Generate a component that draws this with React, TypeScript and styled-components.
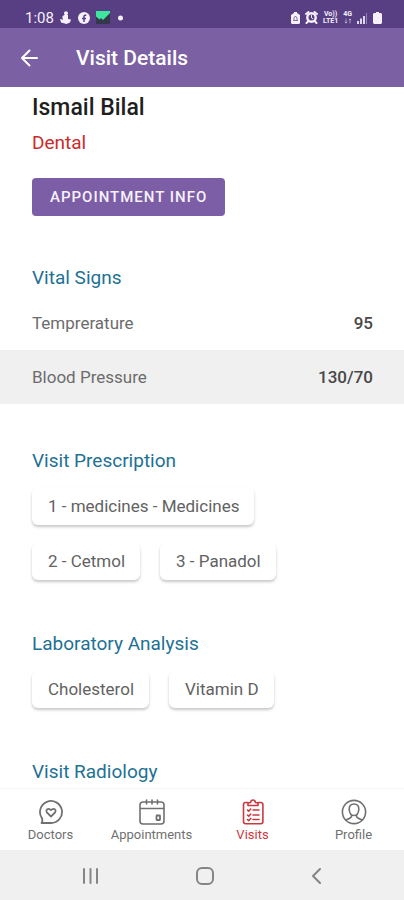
import React from "react";
import styled, { createGlobalStyle } from "styled-components";

const GlobalStyle = createGlobalStyle`
  * { box-sizing: border-box; }
  body { margin: 0; background: #fff; font-family: Roboto, "Liberation Sans", sans-serif; }
  button { font-family: inherit; border: 0; padding: 0; background: none; cursor: pointer; }
`;

const Screen = styled.div`
  display: flex;
  flex-direction: column;
  height: 100vh;
  overflow: hidden;
`;

const StatusBar = styled.div`
  display: flex;
  flex: none;
  justify-content: space-between;
  align-items: center;
  height: 28px;
  padding: 7px 22px 0 25px;
  background: #583e82;
  color: #f5f0fb;
`;

const StatusGroup = styled.div<{ $gap: number }>`
  display: flex;
  align-items: center;
  gap: ${(p) => p.$gap}px;
`;

const Clock = styled.time`
  font-size: 15px;
  line-height: 18px;
`;

const NetworkLabel = styled.span`
  display: flex;
  flex-direction: column;
  align-items: center;
  font-size: 7px;
  line-height: 7px;
  font-weight: 700;
`;

const AppBar = styled.header`
  display: flex;
  flex: none;
  align-items: center;
  gap: 36px;
  height: 59px;
  padding: 0 19px;
  background: #7b60a3;
  color: #fff;
`;

const BackButton = styled.button`
  display: flex;
  color: inherit;
`;

const Title = styled.h1`
  margin: 0;
  font-size: 21px;
  line-height: 24px;
  font-weight: 500;
`;

const Content = styled.main`
  flex: 1;
  min-height: 0;
  overflow: hidden;
  padding-top: 7px;
`;

const Summary = styled.section`
  padding: 0 32px;
`;

const PatientName = styled.h2`
  margin: 0;
  color: #1f1f1f;
  font-size: 23px;
  line-height: 28px;
  font-weight: 500;
`;

const Department = styled.p`
  margin: 9px 0 23px;
  color: #cb2b2b;
  font-size: 19px;
  line-height: 24px;
`;

const InfoButton = styled.button`
  && {
    display: block;
    height: 38px;
    padding: 0 18px;
    border-radius: 4px;
    background: #7b5ea5;
    color: #f7f2fc;
    font-size: 15px;
    font-weight: 500;
    letter-spacing: 1px;
  }
`;

const Section = styled.section`
  padding-top: 45px;
`;

const VitalsSection = styled(Section)`
  padding-top: 50px;
`;

const SectionTitle = styled.h3`
  margin: 0;
  padding: 0 32px;
  color: #1d7195;
  font-size: 19px;
  line-height: 24px;
  font-weight: 400;
`;

const VitalsTable = styled.table`
  width: 100%;
  margin-top: 6px;
  border-collapse: collapse;
  font-size: 17px;
  line-height: 24px;

  tr:nth-child(even) { background: #f0f0f0; }
  th { height: 54px; padding: 0 0 0 32px; text-align: left; font-weight: 400; color: #6c6c6c; }
  td { padding: 0 31px 0 0; text-align: right; font-weight: 500; color: #484848; }
`;

const ChipList = styled.ul`
  display: flex;
  flex-wrap: wrap;
  gap: 18px 20px;
  margin: 0;
  padding: 15px 32px 7px;
  list-style: none;
`;

const Chip = styled.li`
  padding: 0 15px 0 16px;
  border-radius: 6px;
  background: #fff;
  box-shadow: 0 2px 3px rgba(0, 0, 0, 0.22);
  color: #626262;
  font-size: 17px;
  line-height: 37px;
`;

const TabBar = styled.nav`
  display: grid;
  grid-template-columns: repeat(4, 1fr);
  flex: none;
  height: 62px;
  border-top: 1px solid #f5f5f5;
  background: #fff;
`;

const Tab = styled.a<{ $active?: boolean }>`
  display: flex;
  flex-direction: column;
  align-items: center;
  gap: 2px;
  padding-top: 10px;
  color: ${(p) => (p.$active ? "#cc3840" : "#707070")};
  font-size: 13px;
  line-height: 16px;
  text-decoration: none;
`;

const SystemBar = styled.div`
  display: flex;
  flex: none;
  justify-content: space-between;
  align-items: center;
  height: 50px;
  padding: 2px 82px 0;
  background: #f0f0f0;
  color: #858585;
`;

const SystemButton = styled.button`
  display: flex;
  color: inherit;
`;

const line = { fill: "none", stroke: "currentColor", strokeLinecap: "round", strokeLinejoin: "round" } as const;

const NotificationIcons = () => (
  <>
    <svg width="12" height="13" viewBox="0 0 12 13" fill="currentColor" aria-hidden="true">
      <circle cx="6" cy="2.3" r="2" />
      <path d="M4 4h4v4L11 8.500l-1 3L6.500 13 1 11.500 0 8l3 .7-.8-3z" />
    </svg>
    <svg width="12" height="12" viewBox="0 0 12 12" aria-hidden="true">
      <circle cx="6" cy="6" r="6" fill="currentColor" />
      <path d="M8.300 3.300H7.200Q6 3.300 6 4.600V10M4 6.400h4" fill="none" stroke="#583e82" strokeWidth="1.500" />
    </svg>
    <svg width="14" height="13" viewBox="0 0 14 13" aria-hidden="true">
      <rect width="14" height="13" rx="1" fill="#34384a" />
      <path d="M0 0h14v2L7 9 5 7 3.500 8.500 0 5.500z" fill="#3ce5a0" />
    </svg>
    <svg width="13" height="6" viewBox="0 0 13 6" fill="currentColor" aria-hidden="true">
      <circle cx="4.500" cy="3" r="2.500" />
    </svg>
  </>
);

const DeviceIcons = () => (
  <>
    <svg width="9" height="12" viewBox="0 0 9 12" aria-hidden="true">
      <path d="M3 0h3v1l3 2v7.500Q9 12 7.500 12h-6Q0 12 0 10.500V3l3-2z" fill="currentColor" />
      <path d="M2 8.500h5M3 8V6l1.500-2L6 6v2" fill="none" stroke="#583e82" opacity=".7" />
    </svg>
    <svg width="13" height="13" viewBox="0 0 13 13" aria-hidden="true">
      <path d="M1 3l2.500-2M12 3L9.500 1M3 10.500l-1.500 1.500M10 10.500l1.500 1.500" {...line} strokeWidth="2" />
      <circle cx="6.500" cy="6.500" r="4.200" {...line} strokeWidth="2.400" />
      <path d="M6.500 4.500v2.300l1.200.8" {...line} />
    </svg>
    <NetworkLabel>
      <span>Vo))</span>
      <span>LTE1</span>
    </NetworkLabel>
    <NetworkLabel>
      <span>4G</span>
      <svg width="8" height="6" viewBox="0 0 8 6" aria-hidden="true">
        <path d="M2 5V1M1 4l1 1 1-1M6 5V1M5 2l1-1 1 1" {...line} opacity=".5" />
      </svg>
    </NetworkLabel>
    <svg width="11" height="12" viewBox="0 0 11 12" fill="currentColor" aria-hidden="true">
      <path d="M0 9h2v3H0zM3 6.500h2V12H3zM6 4h2v8H6z" opacity=".85" />
      <path d="M9 1h1v11H9z" opacity=".4" />
    </svg>
    <svg width="9" height="12" viewBox="0 0 9 12" fill="currentColor" aria-hidden="true">
      <path d="M3 0h3v1h2l1 1v9l-1 1H1l-1-1V2l1-1h2z" />
    </svg>
  </>
);

const DoctorsIcon = () => (
  <svg width="26" height="26" viewBox="0 0 26 26" {...line} strokeWidth="1.800" aria-hidden="true">
    <path d="M3.500 24H13A11 11 0 1 0 3.800 19q1.300 2.500-.3 5z" />
    <path d="M13 17.500L8.800 13.300q-1-1.800.3-3 2.100-1.200 3.900.8 1.800-2 3.900-.8 1.300 1.200.3 3z" />
  </svg>
);

const AppointmentsIcon = () => (
  <svg width="26" height="26" viewBox="0 0 26 26" {...line} strokeWidth="1.600" aria-hidden="true">
    <rect x="1" y="3" width="24" height="22" rx="3" />
    <path d="M1.500 9.500h23M7.500 1v4M13 1v4M18.500 1v4" />
    <rect x="17.500" y="16.500" width="3.500" height="4.500" rx=".5" strokeWidth="1.800" />
  </svg>
);

const VisitsIcon = () => (
  <svg width="26" height="26" viewBox="0 0 26 26" {...line} strokeWidth="1.600" aria-hidden="true">
    <path d="M8 3.500H5.700Q3.500 3.500 3.500 5.700v16.800q0 2.200 2.200 2.200h15q2.200 0 2.200-2.200V5.700q0-2.200-2.200-2.200H18" />
    <path d="M8 6.500V4l2.500-.5Q11 1 13 1t2.500 2.500L18 4v2.500z" />
    <path d="M7.500 11l1.200 1.200 2-2.200M13 11h6M7.500 16l1.200 1.200 2-2.200M13 16h6M7.500 20.500l1.200 1.200 2-2.200M13 20.500h6" />
  </svg>
);

const ProfileIcon = () => (
  <svg width="26" height="26" viewBox="0 0 26 26" {...line} strokeWidth="1.600" aria-hidden="true">
    <circle cx="13" cy="13" r="11.600" />
    <path d="M13 5c-3.500 0-5 2.300-4.800 5.500.2 3 1.800 6 4.800 6s4.600-3 4.800-6C18 7.300 16.500 5 13 5zM10.500 16v1.500q-.5 1.500-5.500 3.500M15.500 16v1.500q.5 1.500 5.500 3.500" />
  </svg>
);

const vitals = [
  { label: "Temprerature", value: "95" },
  { label: "Blood Pressure", value: "130/70" },
];

const tabs = [
  { label: "Doctors", Icon: DoctorsIcon },
  { label: "Appointments", Icon: AppointmentsIcon },
  { label: "Visits", Icon: VisitsIcon, active: true },
  { label: "Profile", Icon: ProfileIcon },
];

function ChipSection({ title, items }: { title: string; items: string[] }) {
  return (
    <Section>
      <SectionTitle>{title}</SectionTitle>
      <ChipList>
        {items.map((item) => (
          <Chip key={item}>{item}</Chip>
        ))}
      </ChipList>
    </Section>
  );
}

export default function App() {
  return (
    <Screen>
      <GlobalStyle />
      <StatusBar>
        <StatusGroup $gap={6}>
          <Clock>1:08</Clock>
          <NotificationIcons />
        </StatusGroup>
        <StatusGroup $gap={5}>
          <DeviceIcons />
        </StatusGroup>
      </StatusBar>
      <AppBar>
        <BackButton aria-label="Back">
          <svg width="21" height="20" viewBox="0 0 21 20" {...line} strokeWidth="2" aria-hidden="true">
            <path d="M18 10H3M10.500 2.500L3 10l7.500 7.500" />
          </svg>
        </BackButton>
        <Title>Visit Details</Title>
      </AppBar>
      <Content>
        <Summary>
          <PatientName>Ismail Bilal</PatientName>
          <Department>Dental</Department>
          <InfoButton>APPOINTMENT INFO</InfoButton>
        </Summary>
        <VitalsSection>
          <SectionTitle id="vitals">Vital Signs</SectionTitle>
          <VitalsTable aria-labelledby="vitals">
            <tbody>
              {vitals.map(({ label, value }) => (
                <tr key={label}>
                  <th scope="row">{label}</th>
                  <td>{value}</td>
                </tr>
              ))}
            </tbody>
          </VitalsTable>
        </VitalsSection>
        <ChipSection title="Visit Prescription" items={["1 - medicines - Medicines", "2 - Cetmol", "3 - Panadol"]} />
        <ChipSection title="Laboratory Analysis" items={["Cholesterol", "Vitamin D"]} />
        <Section>
          <SectionTitle>Visit Radiology</SectionTitle>
        </Section>
      </Content>
      <TabBar>
        {tabs.map(({ label, Icon, active }) => (
          <Tab key={label} href="#" $active={active} aria-current={active ? "page" : undefined}>
            <Icon />
            {label}
          </Tab>
        ))}
      </TabBar>
      <SystemBar>
        <SystemButton aria-label="Recent apps">
          <svg width="16" height="18" viewBox="0 0 16 18" {...line} strokeWidth="2" aria-hidden="true">
            <path d="M2 2v14M8.500 2v14M15 2v14" />
          </svg>
        </SystemButton>
        <SystemButton aria-label="Home">
          <svg width="18" height="18" viewBox="0 0 18 18" {...line} strokeWidth="2" aria-hidden="true">
            <rect x="1" y="1" width="16" height="16" rx="5" />
          </svg>
        </SystemButton>
        <SystemButton aria-label="Back to previous screen">
          <svg width="10" height="18" viewBox="0 0 10 18" {...line} strokeWidth="2" aria-hidden="true">
            <path d="M8 2L1 9l7 7" />
          </svg>
        </SystemButton>
      </SystemBar>
    </Screen>
  );
}
